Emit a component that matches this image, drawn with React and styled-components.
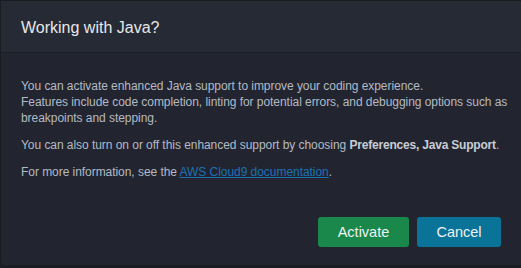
import React from 'react'
import styled, { createGlobalStyle } from 'styled-components'

const Global = createGlobalStyle`
  html, body {
    margin: 0;
    padding: 0;
    background: #1b1d24;
    font-family: "Liberation Sans", Arial, sans-serif;
  }
`

const Dialog = styled.div`
  width: 521px;
  height: 265px;
  box-sizing: border-box;
  background: #22252f;
  border-left: 1px solid #1a1c22;
  border-top: 1px solid #1a1c22;
  border-radius: 0 0 0 3px;
  display: flex;
  flex-direction: column;
`

const Header = styled.div`
  height: 52px;
  box-sizing: border-box;
  background: #262a35;
  border-bottom: 1px solid #1e2028;
  display: flex;
  align-items: center;
  padding: 3px 20px 0;
`

const Title = styled.h2`
  margin: 0;
  font-size: 16px;
  font-weight: 400;
  color: #e6e8ec;
`

const Body = styled.div`
  flex: 1;
  padding: 25px 4px 0 20px;
  font-size: 12px;
  line-height: 16px;
  letter-spacing: -0.05px;
  color: #b4bac4;
`

const Para = styled.p`
  margin: 0 0 11px;
  white-space: ${p => (p.nowrap ? 'nowrap' : 'normal')};
`

const Strong = styled.b`
  color: #c8cdd5;
  letter-spacing: -0.2px;
`

const Link = styled.a`
  color: #1a72b6;
  text-decoration: underline;
`

const Footer = styled.div`
  display: flex;
  justify-content: flex-end;
  gap: 8px;
  padding: 0 20px 18px;
`

const Button = styled.button`
  height: 30px;
  min-width: ${p => p.w}px;
  border: none;
  border-radius: 3px;
  background: ${p => p.bg};
  color: #eef2f4;
  font-family: "Liberation Sans", Arial, sans-serif;
  font-size: 14.5px;
  padding: 0 14px;
  cursor: pointer;
`

export default function App() {
  return (
    <>
      <Global />
      <Dialog>
        <Header>
          <Title>Working with Java?</Title>
        </Header>
        <Body>
          <Para>
            You can activate enhanced Java support to improve your coding experience.
            <br />
            Features include code completion, linting for potential errors, and debugging options such as
            <br />
            breakpoints and stepping.
          </Para>
          <Para nowrap>
            You can also turn on or off this enhanced support by choosing <Strong>Preferences, Java Support</Strong>.
          </Para>
          <Para>
            For more information, see the <Link href="#">AWS Cloud9 documentation</Link>.
          </Para>
        </Body>
        <Footer>
          <Button bg="#19884a" w={91}>Activate</Button>
          <Button bg="#0a7398" w={84}>Cancel</Button>
        </Footer>
      </Dialog>
    </>
  )
}
